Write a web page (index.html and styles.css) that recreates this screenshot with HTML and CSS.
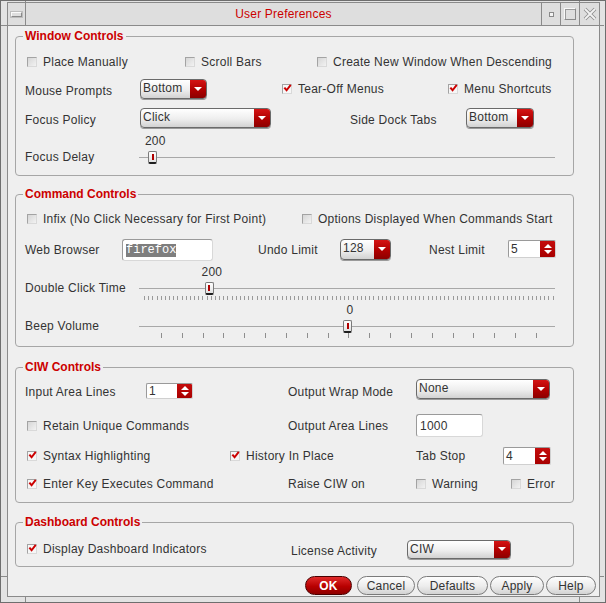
FILE: index.html
```html
<!DOCTYPE html>
<html>
<head>
<meta charset="utf-8">
<title>User Preferences</title>
<link rel="stylesheet" href="styles.css">
</head>
<body>
<div class="window">
  <div class="inner">
    <div class="titlebar">
      <div class="tb-btn tb-left"><span class="ico-menu"></span></div>
      <div class="tb-title">User Preferences</div>
      <div class="tb-btn tb-r"><span class="ico-min"></span></div>
      <div class="tb-btn tb-r"><span class="ico-max"></span></div>
      <div class="tb-btn tb-r tb-close">
        <svg width="14" height="14" viewBox="0 0 14 14"><path d="M2 2 L12 12 M12 2 L2 12" stroke="#8e8e8e" stroke-width="3.6" fill="none"/><path d="M2 2 L12 12 M12 2 L2 12" stroke="#f2f2f2" stroke-width="1.8" fill="none"/></svg>
      </div>
    </div>

    <div class="content">
      <fieldset class="group g-wc">
        <legend>Window Controls</legend>
        <div class="rows">
          <div class="row r-wc1 mt9">
            <span class="cb"><span class="box"></span>Place Manually</span>
            <span class="cb"><span class="box"></span>Scroll Bars</span>
            <span class="cb"><span class="box"></span>Create New Window When Descending</span>
          </div>
          <div class="row r-wc2 mt7">
            <span class="lbl down2">Mouse Prompts</span>
            <span class="dd w67"><span class="dd-text">Bottom</span><span class="dd-arrow"></span></span>
            <span class="cb"><span class="box on"><svg width="10" height="10" viewBox="0 0 10 10"><path d="M1.5 4.5 L4 7.5 L8.6 1.6" stroke="#cc0000" stroke-width="2.2" fill="none"/></svg></span>Tear-Off Menus</span>
            <span class="cb"><span class="box on"><svg width="10" height="10" viewBox="0 0 10 10"><path d="M1.5 4.5 L4 7.5 L8.6 1.6" stroke="#cc0000" stroke-width="2.2" fill="none"/></svg></span>Menu Shortcuts</span>
          </div>
          <div class="row r-wc3 mt9">
            <span class="lbl down2">Focus Policy</span>
            <span class="dd w131"><span class="dd-text">Click</span><span class="dd-arrow"></span></span>
            <span class="lbl down2">Side Dock Tabs</span>
            <span class="dd w68"><span class="dd-text">Bottom</span><span class="dd-arrow"></span></span>
          </div>
          <div class="slider mt7">
            <div class="s-vals"><span class="s-val" style="left:3.2%">200</span></div>
            <div class="s-row">
              <span class="lbl s-lbl">Focus Delay</span>
              <div class="track"><span class="t-line"></span><span class="handle" style="left:3.2%"></span></div>
            </div>
          </div>
        </div>
      </fieldset>

      <fieldset class="group g-cc">
        <legend>Command Controls</legend>
        <div class="rows">
          <div class="row r-cc1 mt8">
            <span class="cb"><span class="box"></span>Infix (No Click Necessary for First Point)</span>
            <span class="cb"><span class="box"></span>Options Displayed When Commands Start</span>
          </div>
          <div class="row row22 r-cc2 mt10">
            <span class="lbl">Web Browser</span>
            <span class="tf w91 h22"><span class="sel">firefox</span></span>
            <span class="lbl">Undo Limit</span>
            <span class="dd w51 h21 up1"><span class="dd-text">128</span><span class="dd-arrow"></span></span>
            <span class="lbl">Nest Limit</span>
            <span class="spin w48 h18 up1"><span class="spin-val">5</span><span class="spin-btn"><i class="tri-up"></i><i class="tri-down"></i></span></span>
          </div>
          <div class="slider mt5">
            <div class="s-vals"><span class="s-val" style="left:16.8%">200</span></div>
            <div class="s-row">
              <span class="lbl s-lbl">Double Click Time</span>
              <div class="track"><span class="t-line"></span><span class="ticks ticks-dense"></span><span class="handle" style="left:16.8%"></span></div>
            </div>
          </div>
          <div class="slider mt6">
            <div class="s-vals"><span class="s-val" style="left:50%">0</span></div>
            <div class="s-row">
              <span class="lbl s-lbl">Beep Volume</span>
              <div class="track"><span class="t-line"></span><span class="ticks ticks-wide"></span><span class="handle" style="left:50%"></span></div>
            </div>
          </div>
        </div>
      </fieldset>

      <fieldset class="group g-ciw">
        <legend>CIW Controls</legend>
        <div class="rows">
          <div class="row r-ciw1 mt7">
            <span class="lbl down1">Input Area Lines</span>
            <span class="spin w47 h16"><span class="spin-val">1</span><span class="spin-btn"><i class="tri-up"></i><i class="tri-down"></i></span></span>
            <span class="lbl down1">Output Wrap Mode</span>
            <span class="dd w134 up3"><span class="dd-text">None</span><span class="dd-arrow"></span></span>
          </div>
          <div class="row row22 r-ciw2 mt13">
            <span class="cb"><span class="box"></span>Retain Unique Commands</span>
            <span class="lbl">Output Area Lines</span>
            <span class="tf w67 h23"><span class="tf-text">1000</span></span>
          </div>
          <div class="row r-ciw3 mt10">
            <span class="cb"><span class="box on"><svg width="10" height="10" viewBox="0 0 10 10"><path d="M1.5 4.5 L4 7.5 L8.6 1.6" stroke="#cc0000" stroke-width="2.2" fill="none"/></svg></span>Syntax Highlighting</span>
            <span class="cb"><span class="box on"><svg width="10" height="10" viewBox="0 0 10 10"><path d="M1.5 4.5 L4 7.5 L8.6 1.6" stroke="#cc0000" stroke-width="2.2" fill="none"/></svg></span>History In Place</span>
            <span class="lbl">Tab Stop</span>
            <span class="spin w48 h18"><span class="spin-val">4</span><span class="spin-btn"><i class="tri-up"></i><i class="tri-down"></i></span></span>
          </div>
          <div class="row r-ciw4 mt8">
            <span class="cb"><span class="box on"><svg width="10" height="10" viewBox="0 0 10 10"><path d="M1.5 4.5 L4 7.5 L8.6 1.6" stroke="#cc0000" stroke-width="2.2" fill="none"/></svg></span>Enter Key Executes Command</span>
            <span class="lbl">Raise CIW on</span>
            <span class="cb"><span class="box"></span>Warning</span>
            <span class="cb"><span class="box"></span>Error</span>
          </div>
        </div>
      </fieldset>

      <fieldset class="group g-db">
        <legend>Dashboard Controls</legend>
        <div class="rows">
          <div class="row r-db mt10">
            <span class="cb"><span class="box on"><svg width="10" height="10" viewBox="0 0 10 10"><path d="M1.5 4.5 L4 7.5 L8.6 1.6" stroke="#cc0000" stroke-width="2.2" fill="none"/></svg></span>Display Dashboard Indicators</span>
            <span class="lbl down2">License Activity</span>
            <span class="dd w104 h19"><span class="dd-text">CIW</span><span class="dd-arrow"></span></span>
          </div>
        </div>
      </fieldset>

      <div class="buttons">
        <span class="btn btn-ok">OK</span>
        <span class="btn b-cancel">Cancel</span>
        <span class="btn b-defaults">Defaults</span>
        <span class="btn b-apply">Apply</span>
        <span class="btn b-help">Help</span>
      </div>
    </div>
  </div>
</div>
</body>
</html>
```

FILE: styles.css
```css
* { box-sizing: border-box; }
html, body { margin: 0; padding: 0; }
body {
  width: 606px; height: 603px; overflow: hidden;
  font-family: "Liberation Sans", Arial, sans-serif;
  font-size: 12px; color: #333;
  letter-spacing: 0.25px;
  background: #e3e3e3;
}

/* window frame */
.window {
  width: 606px; height: 603px;
  border: 1px solid #6e6e6e;
  padding: 1px 5px 5px 6px;
  background-color: #e3e3e3;
  background-image:
    linear-gradient(#8a8a8a, #8a8a8a),
    linear-gradient(#8a8a8a, #8a8a8a),
    linear-gradient(#8a8a8a, #8a8a8a),
    linear-gradient(#8a8a8a, #8a8a8a),
    linear-gradient(#8a8a8a, #8a8a8a),
    linear-gradient(#8a8a8a, #8a8a8a),
    linear-gradient(#8a8a8a, #8a8a8a),
    linear-gradient(#8a8a8a, #8a8a8a);
  background-repeat: no-repeat;
  background-size: 1px 1px, 1px 1px, 6px 1px, 6px 1px, 5px 1px, 5px 1px, 1px 5px, 1px 5px;
  background-position: 24px 0, 578px 0, 0 24px, 0 575px, 598px 24px, 598px 575px, 24px 596px, 578px 596px;
}
.inner {
  height: 100%;
  border: 1px solid #8a8a8a;
  background: #efefef;
  display: flex; flex-direction: column;
}

/* title bar */
.titlebar {
  flex: none; height: 23px;
  border-bottom: 1px solid #8a8a8a;
  background: #dedede;
  display: flex;
}
.tb-btn { display: flex; align-items: center; justify-content: center; }
.tb-left { width: 18px; border-right: 1px solid #8a8a8a; }
.tb-r { width: 19px; border-left: 1px solid #8a8a8a; }
.tb-close { width: 20px; }
.tb-title { flex: 1; text-align: center; line-height: 22px; color: #cc0000; letter-spacing: 0.2px; }
.ico-menu {
  width: 11px; height: 5px; margin-top: 1px;
  border: 1px solid; border-color: #fafafa #8a8a8a #8a8a8a #fafafa;
  box-shadow: 0 0 0 1px #bdbdbd;
}
.ico-min {
  width: 5px; height: 5px;
  border: 1px solid #8a8a8a; background: #f4f4f4;
}
.ico-max {
  width: 12px; height: 12px;
  border: 1px solid; border-color: #f8f8f8 #8a8a8a #8a8a8a #f8f8f8;
  box-shadow: inset 1px 1px 0 #9a9a9a;
}

/* content */
.content { flex: 1; padding: 3px 0 0 7px; display: flex; flex-direction: column; }

.group {
  margin: 0; padding: 0 0 8px 0;
  width: 559px; min-width: 0;
  border: 1px solid #a6a6a6; border-radius: 4px;
}
.group legend {
  margin-left: 7px; padding: 0 2px;
  font-weight: bold; color: #cc0000;
  font-size: 12px; line-height: 14px; letter-spacing: 0;
}
.g-cc { margin-top: 11px; padding-bottom: 10px; }
.g-ciw { margin-top: 13px; }
.g-db { margin-top: 12px; padding-bottom: 7px; }

.rows { padding-left: 9px; display: flex; flex-direction: column; }
.row { display: grid; align-items: center; height: 20px; white-space: nowrap; }
.row22 { height: 22px; }
.mt5 { margin-top: 5px; } .mt6 { margin-top: 6px; } .mt7 { margin-top: 7px; }
.mt8 { margin-top: 8px; } .mt9 { margin-top: 9px; } .mt10 { margin-top: 10px; }
.mt13 { margin-top: 13px; }

.r-wc1 { grid-template-columns: 158px 132px 1fr; }
.r-wc2 { grid-template-columns: 115px 140px 166px 1fr; }
.r-wc3 { grid-template-columns: 115px 210px 116px 1fr; }
.r-cc1 { grid-template-columns: 275px 1fr; }
.r-cc2 { grid-template-columns: 97px 136px 82px 89px 79px 1fr; }
.r-ciw1 { grid-template-columns: 121px 142px 128px 1fr; }
.r-ciw2 { grid-template-columns: 263px 128px 1fr; }
.r-ciw3 { grid-template-columns: 203px 188px 87px 1fr; }
.r-ciw4 { grid-template-columns: 263px 126px 95px 1fr; }
.r-db { grid-template-columns: 266px 116px 1fr; }

.lbl { line-height: 14px; }
.down1 { position: relative; top: 1px; }
.down2 { position: relative; top: 2px; }
.up1 { position: relative; top: -1px; }
.up3 { position: relative; top: -2px; }

/* checkbox */
.cb { display: inline-flex; align-items: center; margin-left: 2px; line-height: 14px; }
.box {
  flex: none; width: 10px; height: 10px; margin-right: 6px;
  border: 1px solid; border-color: #a3a3a3 #d9d9d9 #d9d9d9 #a3a3a3;
  background: linear-gradient(135deg, #d6d6d6, #f2f2f2);
  display: inline-flex; align-items: center; justify-content: center;
}
.box.on { background: #f6f6f6; }
.box svg { display: block; margin: -2px -1px 0 0; }

/* dropdown */
.dd {
  display: inline-flex; height: 20px;
  border: 1px solid #6a6a6a; border-radius: 4px;
  background: linear-gradient(#ffffff, #eeeeee 55%, #d2d2d2);
  box-shadow: 0 1px 0 #9a9a9a;
  overflow: hidden;
}
.dd-text { flex: 1; padding-left: 2px; line-height: 16px; }
.dd-arrow {
  flex: none; width: 16px;
  background: linear-gradient(#d41414, #b00000 55%, #8c0000);
  display: flex; align-items: center; justify-content: center;
}
.dd-arrow::after {
  content: ""; width: 0; height: 0;
  border-left: 4px solid transparent; border-right: 4px solid transparent;
  border-top: 4px solid #ffffff;
}
.w67 { width: 67px; } .w131 { width: 131px; } .w68 { width: 68px; }
.w51 { width: 51px; } .w48 { width: 48px; } .w47 { width: 47px; }
.w91 { width: 91px; } .w134 { width: 134px; } .w104 { width: 104px; }
.h16 { height: 16px; } .h18 { height: 18px; } .h19 { height: 19px; }
.h21 { height: 21px; } .h22 { height: 22px; } .h23 { height: 23px; }

/* text field */
.tf {
  display: inline-flex; align-items: center;
  border: 1px solid; border-color: #9a9a9a #d8d8d8 #d8d8d8 #9a9a9a;
  border-radius: 3px; background: #ffffff; padding-left: 3px;
}
.sel {
  font-family: "Liberation Mono", "Courier New", monospace; font-size: 12px;
  letter-spacing: 0;
  background: #7e7e7e; color: #ffffff; line-height: 13px;
}
.tf-text { line-height: 14px; }

/* spin box */
.spin {
  display: inline-flex;
  border: 1px solid; border-color: #9a9a9a #d0d0d0 #d0d0d0 #9a9a9a;
  background: #ffffff; border-radius: 2px; overflow: hidden;
}
.spin-val { flex: 1; padding-left: 2px; line-height: 14px; display: flex; align-items: center; }
.spin-btn {
  flex: none; width: 15px;
  background: linear-gradient(#c40c0c, #a80000);
  display: flex; flex-direction: column; align-items: center; justify-content: center; gap: 2px;
}
.tri-up, .tri-down { width: 0; height: 0; border-left: 4px solid transparent; border-right: 4px solid transparent; }
.tri-up { border-bottom: 4px solid #ffffff; }
.tri-down { border-top: 4px solid #ffffff; }

/* sliders */
.slider { display: flex; flex-direction: column; }
.s-vals { margin-left: 114px; width: 416px; height: 12px; position: relative; line-height: 12px; }
.s-val { position: absolute; top: 0; transform: translateX(-50%); margin-left: 3px; }
.s-row { display: flex; height: 20px; align-items: center; }
.s-lbl { width: 114px; flex: none; }
.track { position: relative; width: 416px; height: 20px; }
.t-line { position: absolute; left: 0; right: 0; top: 10px; height: 1px; background: #a8a8a8; }
.ticks { position: absolute; }
.ticks-dense {
  left: 5px; width: 410px; top: 18px; height: 4px;
  background: repeating-linear-gradient(to right, #9a9a9a 0 1px, transparent 1px 4.17px);
}
.ticks-wide {
  left: 22px; width: 377px; top: 17px; height: 5px;
  background: repeating-linear-gradient(to right, #8e8e8e 0 1px, transparent 1px 20.83px);
}
.handle {
  position: absolute; top: 4px; width: 9px; height: 13px; margin-left: -4px;
  border: 1px solid #7a7a7a; border-bottom: 2px solid #1e1e1e; border-radius: 2px;
  background: linear-gradient(#ffffff, #e2e2e2);
  display: flex; justify-content: center; align-items: center;
}
.handle::after { content: ""; width: 2px; height: 6px; background: #b00000; }

/* buttons */
.buttons { margin-top: 9px; display: flex; justify-content: flex-end; gap: 2px; padding-right: 3px; }
.btn {
  height: 19px; display: flex; align-items: center; justify-content: center;
  border: 1px solid #7a7a7a; border-radius: 10px;
  background: linear-gradient(#fdfdfd, #ececec 55%, #d3d3d3);
  color: #333; font-size: 12px; letter-spacing: 0.2px;
}
.btn-ok {
  width: 47px; margin-right: 3px;
  background: linear-gradient(#e02a2a, #b80000 55%, #8e0000);
  border-color: #4a0000; color: #ffffff; font-weight: bold;
}
.b-cancel { width: 58px; }
.b-defaults { width: 71px; }
.b-apply { width: 54px; }
.b-help { width: 50px; }
```
